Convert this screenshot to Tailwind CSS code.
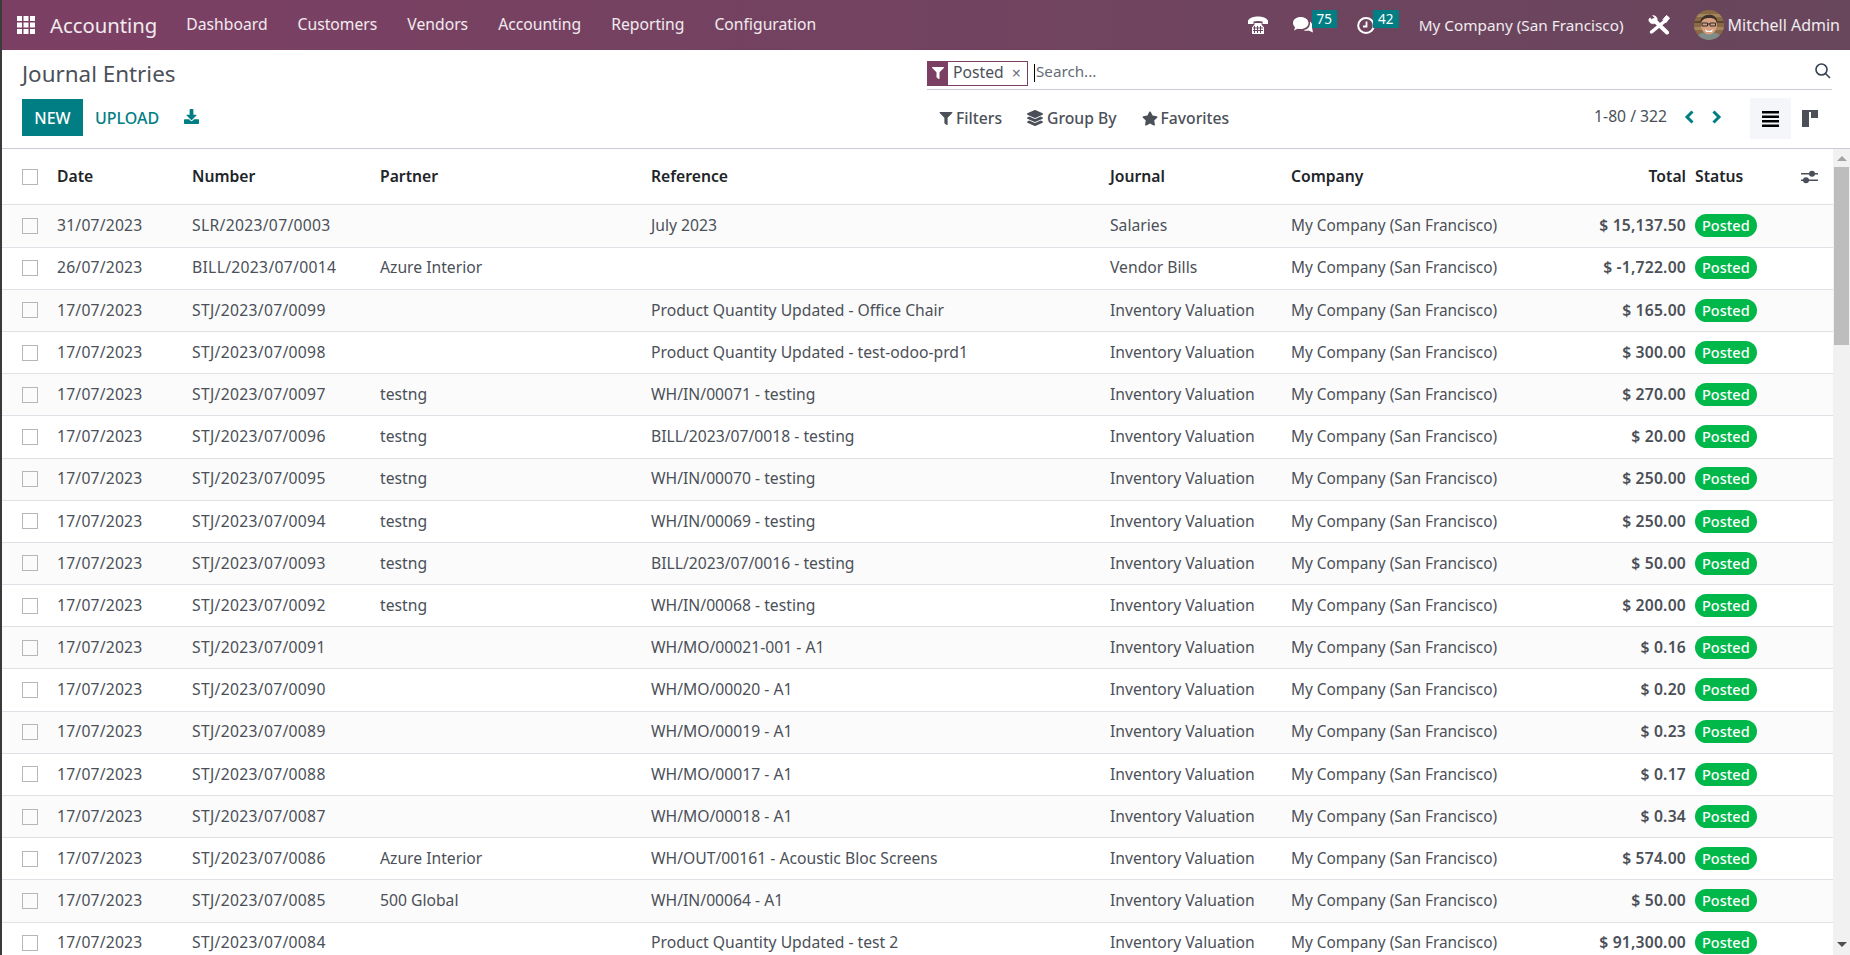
<!DOCTYPE html>
<html lang="en">

<head>
    <meta charset="UTF-8">
    <meta name="viewport" content="width=device-width, initial-scale=1.0">
    <script src="https://cdn.jsdelivr.net/npm/@tailwindcss/browser@4"></script>
    <title>Journal Entries</title>
</head>

<body class="h-screen overflow-hidden bg-white border-l-2 border-[#3a3a3a] font-['Noto_Sans',sans-serif] text-[15.7px] text-[#4b5058]">

    <!-- top bar -->
    <nav class="flex items-center h-[50px] bg-linear-to-r from-[#7c3f64] to-[#68465c] text-white/90">
        <svg class="ml-[15px] w-[18px] h-[18px] fill-white" viewBox="0 0 18 18">
            <rect width="5" height="5"/><rect x="6.500" width="5" height="5"/><rect x="13" width="5" height="5"/>
            <rect y="6.500" width="5" height="5"/><rect x="6.500" y="6.500" width="5" height="5"/><rect x="13" y="6.500" width="5" height="5"/>
            <rect y="13" width="5" height="5"/><rect x="6.500" y="13" width="5" height="5"/><rect x="13" y="13" width="5" height="5"/>
        </svg>
        <span class="ml-[15px] text-[20.300px]">Accounting</span>
        <div class="flex ml-[29px] gap-[30px]">
            <span>Dashboard</span><span>Customers</span><span>Vendors</span><span>Accounting</span><span>Reporting</span><span>Configuration</span>
        </div>
        <div class="flex items-center ml-auto pr-[10px]">
            <svg class="w-[20px] h-[20px] mr-[25px]" viewBox="0 0 20 20" fill="#fff">
                <path d="M0 5.500C3 0 17 0 20 5.500V9h-5.500V6.500C12 5.700 8 5.700 5.500 6.500V9H0z"/>
                <path fill-rule="evenodd" d="M6.500 8h7v1.500l2.500 3V19H4v-6.500l2.500-3z"/>
                <g fill="#6d4560">
                    <rect x="6" y="11" width="1" height="7"/><rect x="9" y="11" width="1" height="7"/><rect x="12" y="11" width="1" height="7"/>
                    <rect x="5" y="12.500" width="10" height="1"/><rect x="5" y="15" width="10" height="1"/>
                </g>
            </svg>
            <div class="relative mr-[44px]">
                <svg class="w-[20px] h-[16px] fill-white" viewBox="0 0 20 16">
                    <path d="M7.500 0C12 0 15.500 2.500 15.500 6s-3.500 6-8 6c-1 0-2 0-3-.300L1 13.500l1-3.300C.8 9 0 7.600 0 6 0 2.500 3.500 0 7.500 0z"/>
                    <path d="M17 4.500c2 1.500 3 3.500 2 6l1 5-4.500-2c-1.500.500-3 .500-5-.500 4.500-.500 7-3.500 6.500-8.500z"/>
                </svg>
                <span class="absolute left-[19px] -top-[7px] bg-[#017e84] text-white text-[13.500px] leading-[18px] w-[25px] text-center">75</span>
            </div>
            <div class="relative mr-[44px]">
                <svg class="w-[18px] h-[17px] fill-none stroke-white" viewBox="0 0 18 17">
                    <ellipse cx="9" cy="8.500" rx="7.800" ry="7.500" stroke-width="2"/>
                    <path d="M9.500 4.500v5H6" stroke-width="1.800"/>
                </svg>
                <span class="absolute left-[16px] -top-[7px] bg-[#017e84] text-white text-[13.500px] leading-[18px] w-[26px] text-center">42</span>
            </div>
            <span class="whitespace-nowrap text-[15.300px]">My Company (San Francisco)</span>
            <svg class="w-[22px] h-[20px] ml-[24px] fill-white stroke-white" viewBox="0 0 22 20">
                <path d="M6 5 19 17.500" fill="none" stroke-width="4" stroke-linecap="round"/>
                <path d="M4.500 .500 7 3 4.700 5.200 2 2.800.700 4.500c0 2.500 2 4.300 4.300 4.300 2.500 0 4.300-2 4.300-4.300C9.300 2 7 .300 4.500 .500z" stroke-width=".5"/>
                <path d="M17 6 3.500 17" fill="none" stroke-width="3.500" stroke-linecap="round"/>
                <path d="M15 4.500 18.500 .500 21.500 3 18 7.500z" stroke-width="1"/>
            </svg>
            <svg class="w-[30px] h-[30px] ml-[24px] rounded-full" viewBox="0 0 30 30">
                <rect width="30" height="30" fill="#8a6a45"/>
                <rect y="4" width="30" height="3" fill="#a5855c"/><rect y="11" width="30" height="2" fill="#5e4832"/><rect y="17" width="30" height="3" fill="#a5855c"/>
                <path d="M2 30c1-7 7-8 13-8s12 1 13 8z" fill="#7f8c88"/>
                <ellipse cx="15" cy="15" rx="8" ry="9.500" fill="#d6a080"/>
                <path d="M6.500 13C5 3 24 1 23.500 13c-2-4-4-5-8-5s-7 1-9 5z" fill="#3d3129"/>
                <path d="M8 13h5.500v3H8zM16 13h5.500v3H16zM13.500 14H16" fill="none" stroke="#2d2d2d"/>
                <path d="M11 19c2 2.500 6 2.500 8 0l-1 3h-6z" fill="#fff"/>
            </svg>
            <span class="ml-[4px] whitespace-nowrap text-[16px]">Mitchell Admin</span>
        </div>
    </nav>

    <!-- control panel -->
    <header class="flex h-[99px] pl-[20px] pr-[18px] border-b border-[#c9ccd2]">
        <div class="w-[905px] shrink-0">
            <h1 class="mt-[8px] text-[22.400px] leading-[32px]">Journal Entries</h1>
            <div class="flex items-center mt-[9px]">
                <button class="h-[37px] w-[61px] bg-[#017e84] text-white text-[16px] font-medium">NEW</button>
                <button class="ml-[12px] text-[#017e84] text-[16px] font-medium">UPLOAD</button>
                <svg class="ml-[25px] -mt-[3px] w-[15px] h-[15px] fill-[#017e84]" viewBox="0 0 512 512">
                    <path d="M216 0h80c13 0 24 11 24 24v168h88c18 0 27 21 14 34L270 378c-8 8-20 8-28 0L90 226c-13-13-4-34 14-34h88V24c0-13 11-24 24-24z"/>
                    <path d="M512 376v112c0 13-11 24-24 24H24c-13 0-24-11-24-24V376c0-13 11-24 24-24h147l49 49c20 20 52 20 72 0l49-49h147c13 0 24 11 24 24z"/>
                </svg>
            </div>
        </div>
        <div class="flex-1">
            <div class="flex items-center h-[40px] border-b border-[#c9ccd2] pt-[7px]">
                <div class="flex items-center h-[25px] w-[101px] border border-[#7c3f64]">
                    <span class="flex items-center justify-center w-[20px] h-full bg-[#7c3f64]">
                        <svg class="w-[12px] h-[12px] fill-white" viewBox="0 0 512 512"><path d="M488 0H24C3 0-8 26 7 41l185 185v206c0 8 4 15 10 20l80 56c16 11 38 0 38-20V226L505 41c15-15 4-41-17-41z"/></svg>
                    </span>
                    <span class="ml-[5px] -mt-px">Posted</span>
                    <span class="ml-[8px] text-[#6c7280] text-[16px] leading-none">×</span>
                </div>
                <span class="ml-[6px] w-px h-[18px] bg-black"></span>
                <span class="ml-px -mt-[3px] text-[15.200px] text-[#666c75]">Search...</span>
                <svg class="ml-auto mr-[1px] -mt-[5px] w-[16px] h-[16px] fill-none stroke-[#374151]" viewBox="0 0 16 16" stroke-width="1.600">
                    <circle cx="6.500" cy="6.500" r="5.500"/><path d="M10.500 10.500 15 15"/>
                </svg>
            </div>
            <div class="flex items-center h-[41px] mt-[8px]">
                <div class="flex items-center ml-[12px] font-medium gap-[25px]">
                    <span class="flex items-center gap-[3px]">
                        <svg class="w-[14px] h-[13px] fill-[#4b5058]" viewBox="0 0 512 512"><path d="M488 0H24C3 0-8 26 7 41l185 185v206c0 8 4 15 10 20l80 56c16 11 38 0 38-20V226L505 41c15-15 4-41-17-41z"/></svg>
                        Filters
                    </span>
                    <span class="flex items-center gap-[4px]">
                        <svg class="w-[16px] h-[16px] fill-[#4b5058]" viewBox="0 0 512 512"><path d="M12.410 148.020l232.940 105.670c6.800 3.090 14.490 3.090 21.290 0l232.940-105.670c16.550-7.510 16.550-32.520 0-40.030L266.650 2.310a25.607 25.607 0 0 0-21.290 0L12.410 107.980c-16.550 7.510-16.550 32.530 0 40.040zm487.180 88.280l-58.090-26.330-161.640 73.270c-7.560 3.430-15.590 5.170-23.860 5.170s-16.290-1.740-23.860-5.170L70.510 209.970l-58.100 26.330c-16.550 7.500-16.550 32.500 0 40l232.940 105.590c6.800 3.080 14.490 3.080 21.290 0L499.590 276.300c16.550-7.500 16.550-32.500 0-40zm0 127.800l-57.870-26.230-161.860 73.370c-7.560 3.430-15.590 5.170-23.860 5.170s-16.290-1.740-23.860-5.170L70.290 337.870 12.410 364.100c-16.550 7.500-16.550 32.500 0 40l232.940 105.590c6.800 3.080 14.490 3.080 21.290 0L499.590 404.100c16.550-7.500 16.550-32.500 0-40z"/></svg>
                        Group By
                    </span>
                    <span class="flex items-center gap-[3px]">
                        <svg class="w-[16px] h-[15px] fill-[#4b5058]" viewBox="0 0 576 512"><path d="M259.300 17.800L194 150.200 47.900 171.500c-26.200 3.800-36.700 36.100-17.700 54.600l105.700 103-25 145.500c-4.500 26.300 23.200 46 46.400 33.700L288 439.600l130.700 68.700c23.200 12.200 50.900-7.400 46.400-33.700l-25-145.500 105.700-103c19-18.500 8.500-50.800-17.700-54.600L382 150.200 316.700 17.800c-11.700-23.600-45.600-23.900-57.400 0z"/></svg>
                        Favorites
                    </span>
                </div>
                <div class="flex items-center ml-auto mr-[3px] -mt-[4px]">
                    <span class="leading-[41px]">1-80 / 322</span>
                    <svg class="ml-[17px] w-[11px] h-[14px] fill-none stroke-[#017e84]" viewBox="0 0 11 14" stroke-width="3"><path d="M8.500 1.500 3 7l5.500 5.500"/></svg>
                    <svg class="ml-[16px] w-[11px] h-[14px] fill-none stroke-[#017e84]" viewBox="0 0 11 14" stroke-width="3"><path d="M2.500 1.500 8 7l-5.500 5.500"/></svg>
                    <span class="flex items-center justify-center ml-[28px] w-[41px] h-[41px] mt-[4px] bg-[#f4f6f9]">
                        <svg class="w-[17px] h-[16px] fill-black" viewBox="0 0 17 16"><rect width="17" height="2.500"/><rect y="4.500" width="17" height="2.500"/><rect y="9" width="17" height="2.500"/><rect y="13.500" width="17" height="2.500"/></svg>
                    </span>
                    <span class="flex items-center justify-center w-[38px] h-[41px] mt-[4px]">
                        <svg class="w-[16px] h-[17px] fill-[#4b5058]" viewBox="0 0 16 17"><rect width="16" height="2" /><rect y="2" width="7" height="15"/><rect x="9" y="2" width="7" height="6"/></svg>
                    </span>
                </div>
            </div>
        </div>
    </header>

    <!-- list -->
    <main class="flex h-[806px] overflow-hidden">
        <div class="flex-1 min-w-0" id="list">
            <div class="grid grid-cols-[35px_135px_188px_271px_459px_181px_1fr_138px] items-center h-[56.4px] border-b border-[#dee2e6] pl-[20px] font-semibold text-[#212529]">
                <span class="w-[16px] h-[16px] border border-[#b6b6b6]"></span>
                <span>Date</span><span>Number</span><span>Partner</span><span>Reference</span><span>Journal</span>
                <span class="flex justify-between pr-[9px]"><span>Company</span><span>Total</span></span>
                <span class="flex items-center justify-between pr-[15px]">
                    <span>Status</span>
                    <svg class="w-[17px] h-[14px] fill-[#4b5058]" viewBox="0 0 17 14"><rect y="3" width="17" height="1.500"/><rect y="9.500" width="17" height="1.500"/><circle cx="11" cy="3.700" r="3"/><circle cx="5" cy="10.200" r="3"/></svg>
                </span>
            </div>
            <div id="rows"></div>
        </div>
        <div class="flex flex-col items-center w-[17px] bg-[#f1f1f1]">
            <span class="mt-[7px] border-x-[5px] border-x-transparent border-b-[5px] border-b-[#a3a3a3]"></span>
            <span class="w-[15px] h-[178px] mt-[6px] bg-[#bdbdbd]"></span>
            <span class="mt-auto mb-[8px] border-x-[5px] border-x-transparent border-t-[5px] border-t-[#505050]"></span>
        </div>
    </main>

    <script>
        const entries = [
            ["31/07/2023", "SLR/2023/07/0003", "", "July 2023", "Salaries", "$ 15,137.50"],
            ["26/07/2023", "BILL/2023/07/0014", "Azure Interior", "", "Vendor Bills", "$ -1,722.00"],
            ["17/07/2023", "STJ/2023/07/0099", "", "Product Quantity Updated - Office Chair", "Inventory Valuation", "$ 165.00"],
            ["17/07/2023", "STJ/2023/07/0098", "", "Product Quantity Updated - test-odoo-prd1", "Inventory Valuation", "$ 300.00"],
            ["17/07/2023", "STJ/2023/07/0097", "testng", "WH/IN/00071 - testing", "Inventory Valuation", "$ 270.00"],
            ["17/07/2023", "STJ/2023/07/0096", "testng", "BILL/2023/07/0018 - testing", "Inventory Valuation", "$ 20.00"],
            ["17/07/2023", "STJ/2023/07/0095", "testng", "WH/IN/00070 - testing", "Inventory Valuation", "$ 250.00"],
            ["17/07/2023", "STJ/2023/07/0094", "testng", "WH/IN/00069 - testing", "Inventory Valuation", "$ 250.00"],
            ["17/07/2023", "STJ/2023/07/0093", "testng", "BILL/2023/07/0016 - testing", "Inventory Valuation", "$ 50.00"],
            ["17/07/2023", "STJ/2023/07/0092", "testng", "WH/IN/00068 - testing", "Inventory Valuation", "$ 200.00"],
            ["17/07/2023", "STJ/2023/07/0091", "", "WH/MO/00021-001 - A1", "Inventory Valuation", "$ 0.16"],
            ["17/07/2023", "STJ/2023/07/0090", "", "WH/MO/00020 - A1", "Inventory Valuation", "$ 0.20"],
            ["17/07/2023", "STJ/2023/07/0089", "", "WH/MO/00019 - A1", "Inventory Valuation", "$ 0.23"],
            ["17/07/2023", "STJ/2023/07/0088", "", "WH/MO/00017 - A1", "Inventory Valuation", "$ 0.17"],
            ["17/07/2023", "STJ/2023/07/0087", "", "WH/MO/00018 - A1", "Inventory Valuation", "$ 0.34"],
            ["17/07/2023", "STJ/2023/07/0086", "Azure Interior", "WH/OUT/00161 - Acoustic Bloc Screens", "Inventory Valuation", "$ 574.00"],
            ["17/07/2023", "STJ/2023/07/0085", "500 Global", "WH/IN/00064 - A1", "Inventory Valuation", "$ 50.00"],
            ["17/07/2023", "STJ/2023/07/0084", "", "Product Quantity Updated - test 2", "Inventory Valuation", "$ 91,300.00"],
        ];

        document.getElementById("rows").innerHTML = entries.map((e, i) => `
            <div class="grid grid-cols-[35px_135px_188px_271px_459px_181px_1fr_138px] items-center h-[42.2px] border-b border-[#dee2e6] pl-[20px] ${i % 2 == 0 ? "bg-[#fbfbfb]" : "bg-white"}">
                <span class="w-[16px] h-[16px] border border-[#b6b6b6]"></span>
                <span class="tracking-[0.2px]">${e[0]}</span><span class="tracking-[0.3px]">${e[1]}</span><span>${e[2]}</span><span>${e[3]}</span><span>${e[4]}</span>
                <span class="flex justify-between pr-[9px]"><span class="text-[15.400px]">My Company (San Francisco)</span><span class="font-semibold tracking-[0.2px]">${e[5]}</span></span>
                <span><span class="inline-block px-[7px] rounded-full bg-[#00b84a] text-white text-[14.500px] leading-[23px] font-medium">Posted</span></span>
            </div>`).join("");
    </script>

</body>

</html>
